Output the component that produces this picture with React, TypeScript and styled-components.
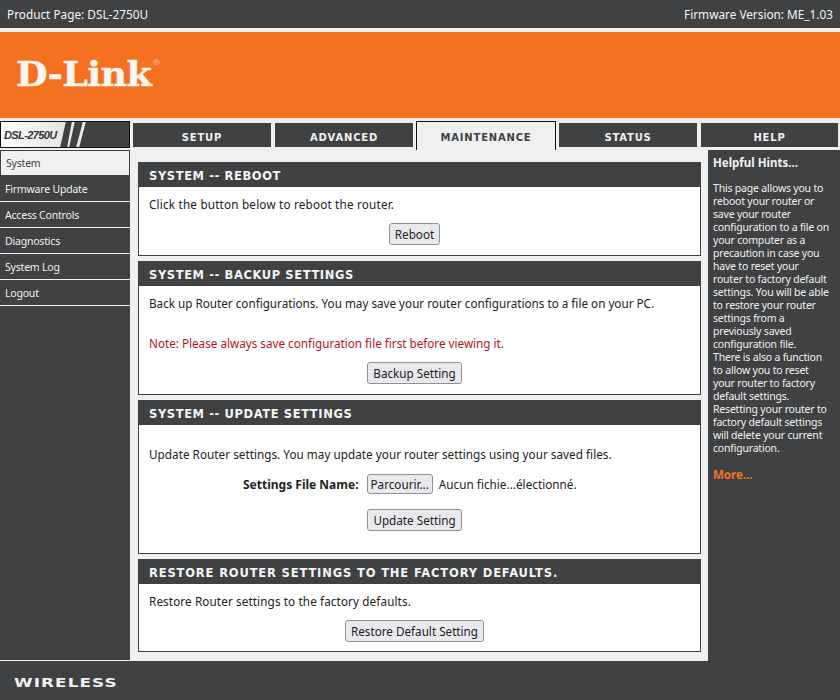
import React from 'react';
import styled, { createGlobalStyle } from 'styled-components';

const GlobalStyle = createGlobalStyle`
  html, body {
    margin: 0;
    padding: 0;
    background: #f0f0f0;
    font-family: "Noto Sans", "DejaVu Sans", sans-serif;
    font-size: 11.7px;
  }
`;

const Page = styled.div`
  width: 840px;
  height: 700px;
  overflow: hidden;
  display: flex;
  flex-direction: column;
  background: #f0f0f0;
`;

const TopBar = styled.div`
  height: 28px;
  flex: none;
  padding: 0 7px;
  display: flex;
  align-items: center;
  justify-content: space-between;
  background: #404143;
  color: #f4f4f4;
  font-size: 11.8px;
`;

const Banner = styled.div`
  height: 86px;
  flex: none;
  box-sizing: border-box;
  margin-top: 4px;
  padding: 0 0 2px 16px;
  display: flex;
  align-items: center;
  background: #f47122;
`;

const Logo = styled.div`
  display: flex;
  align-items: flex-start;
  color: #fdf6ee;
  font-family: "DejaVu Serif", serif;
  font-weight: bold;
  font-size: 34px;
  line-height: 40px;
  letter-spacing: -0.5px;
  -webkit-text-stroke: 0.5px #fdf6ee;
  transform: scaleX(1.07);
  transform-origin: left center;
`;

const LogoMark = styled.span`
  margin-left: 1px;
  font-size: 8px;
  line-height: 18px;
  font-weight: normal;
  letter-spacing: 0;
  -webkit-text-stroke: 0;
  opacity: 0.7;
`;

const NavRow = styled.div`
  flex: none;
  display: flex;
  align-items: flex-end;
  height: 32px;
  padding-bottom: 2px;
  box-sizing: border-box;
`;

const ModelBadge = styled.div`
  width: 130px;
  height: 27px;
  flex: none;
  box-sizing: border-box;
  border: 1px solid #111;
  margin-right: 3px;
  position: relative;
  overflow: hidden;
  background: #404143;
  display: flex;
  align-items: center;
`;

const ModelName = styled.span`
  position: relative;
  z-index: 1;
  padding-left: 3px;
  font-family: "Liberation Sans", sans-serif;
  font-style: italic;
  font-weight: bold;
  font-size: 11px;
  letter-spacing: -0.6px;
  color: #333;
`;

const ModelStripes = styled.svg`
  position: absolute;
  left: -1px;
  top: -1px;
`;

const Tabs = styled.div`
  display: flex;
  align-items: flex-end;
`;

const Tab = styled.div<{ $active?: boolean; $width: number; $gap: number }>`
  width: ${({ $width }) => $width}px;
  margin-right: ${({ $gap }) => $gap}px;
  height: ${({ $active }) => ($active ? '29px' : '24px')};
  margin-bottom: ${({ $active }) => ($active ? '-2px' : '1px')};
  box-sizing: border-box;
  display: flex;
  align-items: center;
  justify-content: center;
  padding-top: ${({ $active }) => ($active ? '3px' : '4px')};
  background: ${({ $active }) => ($active ? '#f0f0f0' : '#404143')};
  color: ${({ $active }) => ($active ? '#404143' : '#f0f0f0')};
  border: ${({ $active }) => ($active ? '1px solid #111' : 'none')};
  border-bottom: none;
  font-family: "DejaVu Sans", sans-serif;
  font-weight: bold;
  font-size: 10px;
  letter-spacing: 0.8px;
`;

const Body = styled.div`
  flex: 1;
  display: flex;
  min-height: 0;
`;

const Sidebar = styled.nav`
  width: 130px;
  flex: none;
  box-sizing: border-box;
  background: #404143;
  border-bottom: 1px solid #f0f0f0;
`;

const SideItem = styled.div<{ $active?: boolean }>`
  height: 26px;
  box-sizing: border-box;
  padding: 0 5px ${({ $active }) => ($active ? '1px' : '0')};
  display: flex;
  align-items: center;
  font-size: 10.5px;
  letter-spacing: -0.2px;
  color: ${({ $active }) => ($active ? '#404143' : '#f0f0f0')};
  background: ${({ $active }) => ($active ? '#f0f0f0' : '#404143')};
  border: ${({ $active }) => ($active ? '1px solid #404143' : 'none')};
  border-bottom: ${({ $active }) => ($active ? '1px solid #404143' : '1px solid #f0f0f0')};
  box-shadow: ${({ $active }) => ($active ? '0 1px 0 #f0f0f0' : 'none')};
`;

const Content = styled.main`
  width: 563px;
  flex: none;
  margin: 12px 7px 0 8px;
  display: flex;
  flex-direction: column;
  gap: 5px;
`;

const Panel = styled.section<{ $height: number }>`
  height: ${({ $height }) => $height}px;
  box-sizing: border-box;
  background: #fff;
  border: 1px solid #404143;
  border-top: none;
  display: flex;
  flex-direction: column;
`;

const PanelTitle = styled.h2<{ $spacing?: number }>`
  margin: 0 -1px;
  height: 25px;
  flex: none;
  box-sizing: border-box;
  padding: 2px 11px 0;
  display: flex;
  align-items: center;
  background: #404143;
  color: #f4f4f4;
  font-family: "DejaVu Sans", sans-serif;
  font-weight: bold;
  font-size: 11.5px;
  letter-spacing: ${({ $spacing }) => $spacing ?? 0.6}px;
`;

const PanelBody = styled.div<{ $top: number }>`
  padding: ${({ $top }) => $top}px 10px 0;
  display: flex;
  flex-direction: column;
`;

const Text = styled.p<{ $mt?: number; $spacing?: number }>`
  margin: ${({ $mt }) => $mt ?? 0}px 0 0;
  line-height: 16px;
  font-size: 11.7px;
  letter-spacing: ${({ $spacing }) => $spacing ?? 0}px;
  color: #222;
`;

const Note = styled(Text)`
  color: #b3141c;
`;

const Center = styled.div<{ $mt: number }>`
  margin-top: ${({ $mt }) => $mt}px;
  padding-right: 10px;
  display: flex;
  justify-content: center;
`;

const Button = styled.button`
  height: 22px;
  padding: 0 5px;
  box-sizing: border-box;
  background: #e9e9ed;
  border: 1px solid #8f8f9d;
  border-radius: 3px;
  font-family: inherit;
  font-size: 11.7px;
  color: #222;
`;

const BrowseButton = styled(Button)`
  height: 20px;
  padding: 0 3px;
`;

const FileRow = styled.div`
  margin-top: 12px;
  padding-left: 94px;
  display: flex;
  align-items: center;
  color: #222;
`;

const FileLabel = styled.label`
  font-size: 12px;
  font-weight: bold;
  margin-right: 8px;
`;

const FileName = styled.span`
  margin-left: 6px;
  letter-spacing: 0.03px;
`;

const Hints = styled.aside`
  flex: 1;
  padding: 6px 0 0 5px;
  background: #404143;
  color: #f0f0f0;
  font-size: 10.5px;
  letter-spacing: -0.2px;
  line-height: 13px;
`;

const HintsTitle = styled.div`
  font-size: 11.5px;
  letter-spacing: 0;
  font-weight: bold;
  margin-bottom: 13px;
`;

const HintLine = styled.div`
  white-space: nowrap;
`;

const MoreLink = styled.a`
  display: block;
  margin-top: 13px;
  font-size: 11.5px;
  letter-spacing: 0;
  color: #f47122;
  font-weight: bold;
`;

const Footer = styled.footer`
  height: 39px;
  flex: none;
  box-sizing: border-box;
  padding: 4px 0 0 14px;
  display: flex;
  align-items: center;
  background: #404143;
`;

const Wireless = styled.span`
  font-family: "DejaVu Sans", sans-serif;
  font-weight: bold;
  font-size: 12px;
  letter-spacing: 0.8px;
  color: #f0f0f0;
  transform: scaleX(1.4);
  transform-origin: left center;
`;

const tabs = [
  { label: 'SETUP', width: 138, gap: 4 },
  { label: 'ADVANCED', width: 138, gap: 3 },
  { label: 'MAINTENANCE', width: 140, gap: 3, active: true },
  { label: 'STATUS', width: 138, gap: 4 },
  { label: 'HELP', width: 137, gap: 0 },
];

const menu = ['System', 'Firmware Update', 'Access Controls', 'Diagnostics', 'System Log', 'Logout'];

const hintLines = [
  'This page allows you to',
  'reboot your router or',
  'save your router',
  'configuration to a file on',
  'your computer as a',
  'precaution in case you',
  'have to reset your',
  'router to factory default',
  'settings. You will be able',
  'to restore your router',
  'settings from a',
  'previously saved',
  'configuration file.',
  'There is also a function',
  'to allow you to reset',
  'your router to factory',
  'default settings.',
  'Resetting your router to',
  'factory default settings',
  'will delete your current',
  'configuration.',
];

const App: React.FC = () => {
  return (
    <Page>
      <GlobalStyle />
      <TopBar>
        <span>Product Page: DSL-2750U</span>
        <span>Firmware Version: ME_1.03</span>
      </TopBar>
      <Banner>
        <Logo>
          D-Link<LogoMark>®</LogoMark>
        </Logo>
      </Banner>
      <NavRow>
        <ModelBadge>
          <ModelStripes width="130" height="27" viewBox="0 0 130 27">
            <defs>
              <linearGradient id="badgeFade" x1="0" x2="1" y1="0" y2="0">
                <stop offset="0" stopColor="#ffffff" />
                <stop offset="1" stopColor="#e4e4e4" />
              </linearGradient>
            </defs>
            <polygon points="0,0 66,0 60,27 0,27" fill="url(#badgeFade)" />
            <polygon points="72,0 75,0 69,27 67,27" fill="#e8e8e8" />
            <polygon points="83,0 86,0 79,27 76,27" fill="#e8e8e8" />
          </ModelStripes>
          <ModelName>DSL-2750U</ModelName>
        </ModelBadge>
        <Tabs>
          {tabs.map(tab => (
            <Tab key={tab.label} $active={tab.active} $width={tab.width} $gap={tab.gap}>
              {tab.label}
            </Tab>
          ))}
        </Tabs>
      </NavRow>
      <Body>
        <Sidebar>
          {menu.map((item, i) => (
            <SideItem key={item} $active={i === 0}>
              {item}
            </SideItem>
          ))}
        </Sidebar>
        <Content>
          <Panel $height={94}>
            <PanelTitle>SYSTEM -- REBOOT</PanelTitle>
            <PanelBody $top={9}>
              <Text $spacing={0.2}>Click the button below to reboot the router.</Text>
              <Center $mt={11}>
                <Button>Reboot</Button>
              </Center>
            </PanelBody>
          </Panel>
          <Panel $height={134}>
            <PanelTitle>SYSTEM -- BACKUP SETTINGS</PanelTitle>
            <PanelBody $top={9}>
              <Text>Back up Router configurations. You may save your router configurations to a file on your PC.</Text>
              <Note $mt={24}>Note: Please always save configuration file first before viewing it.</Note>
              <Center $mt={11}>
                <Button>Backup Setting</Button>
              </Center>
            </PanelBody>
          </Panel>
          <Panel $height={154}>
            <PanelTitle>SYSTEM -- UPDATE SETTINGS</PanelTitle>
            <PanelBody $top={21}>
              <Text $spacing={0.04}>Update Router settings. You may update your router settings using your saved files.</Text>
              <FileRow>
                <FileLabel>Settings File Name:</FileLabel>
                <BrowseButton>Parcourir...</BrowseButton>
                <FileName>Aucun fichie...électionné.</FileName>
              </FileRow>
              <Center $mt={15}>
                <Button>Update Setting</Button>
              </Center>
            </PanelBody>
          </Panel>
          <Panel $height={93}>
            <PanelTitle $spacing={0.85}>RESTORE ROUTER SETTINGS TO THE FACTORY DEFAULTS.</PanelTitle>
            <PanelBody $top={9}>
              <Text $spacing={0.12}>Restore Router settings to the factory defaults.</Text>
              <Center $mt={11}>
                <Button>Restore Default Setting</Button>
              </Center>
            </PanelBody>
          </Panel>
        </Content>
        <Hints>
          <HintsTitle>Helpful Hints...</HintsTitle>
          {hintLines.map((line, i) => (
            <HintLine key={i}>{line}</HintLine>
          ))}
          <MoreLink>More...</MoreLink>
        </Hints>
      </Body>
      <Footer>
        <Wireless>WIRELESS</Wireless>
      </Footer>
    </Page>
  );
};

export default App;
